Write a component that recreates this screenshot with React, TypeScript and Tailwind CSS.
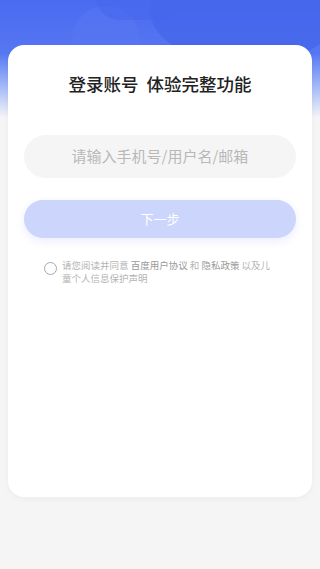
import React from "react";

export default function App() {
  return (
    <div
      className="relative w-[320px] h-[569px] overflow-hidden bg-[#f5f5f5]"
      style={{ fontFamily: '"Noto Sans CJK SC", "Noto Sans", sans-serif' }}
    >
      {/* blue header */}
      <div className="absolute left-0 top-0 w-full h-[118px] bg-gradient-to-b from-[#4a6bf0] via-[#5676f2] via-45% to-[#f5f5f5] overflow-hidden">
        <div className="absolute left-[72px] top-[6px] w-[68px] h-[68px] rounded-full bg-[#5777f3] opacity-60" />
        <div className="absolute left-[150px] -top-[45px] w-[190px] h-[110px] rounded-[50%] bg-[#4465ea] opacity-70" />
        <div className="absolute left-[95px] -top-[30px] w-[90px] h-[50px] rounded-full bg-[#4565eb] opacity-50" />
      </div>

      {/* card */}
      <div className="absolute left-[8px] top-[45px] w-[304px] h-[452px] rounded-[16px] bg-white shadow-[0_2px_6px_rgba(0,0,0,0.04)] flex flex-col items-center">
        <h1 className="mt-[26px] text-[17.5px] leading-[26px] font-medium text-[#222] whitespace-pre">
          {"登录账号  体验完整功能"}
        </h1>

        <div className="mt-[38px] w-[272px] h-[43px] rounded-full bg-[#f5f5f5] flex items-center justify-center">
          <span className="text-[15px] text-[#b8b8b8]">请输入手机号/用户名/邮箱</span>
        </div>

        <button className="mt-[22px] w-[272px] h-[38px] rounded-full bg-[#ccd5fb] text-white text-[13px] shadow-[0_3px_8px_rgba(90,110,240,0.12)]">
          下一步
        </button>

        <div className="mt-[21px] w-[272px] flex items-start pl-[20px]">
          <div className="mt-[3px] w-[13px] h-[13px] rounded-full border border-[#a8a8a8] shrink-0" />
          <p className="ml-[5px] text-[9.5px] leading-[13px] text-[#b4b4b4] whitespace-nowrap">
            请您阅读并同意 <span className="text-[#9a9a9a]">百度用户协议</span> 和{" "}
            <span className="text-[#9a9a9a]">隐私政策</span> 以及儿
            <br />
            童个人信息保护声明
          </p>
        </div>
      </div>
    </div>
  );
}
